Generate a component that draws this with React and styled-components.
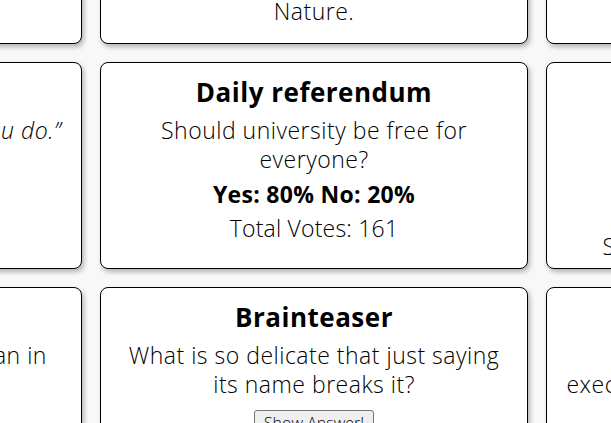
import React from 'react';
import styled, { createGlobalStyle } from 'styled-components';

const GlobalStyle = createGlobalStyle`
  html, body {
    margin: 0;
    padding: 0;
    background: #f8f8f8;
    overflow: hidden;
  }
  body {
    font-family: "Open Sans", Lato, sans-serif;
    color: #000;
  }
`;

const Viewport = styled.div`
  width: 611px;
  height: 423px;
  overflow: hidden;
`;

const Board = styled.div`
  display: grid;
  grid-template-columns: repeat(3, 428px);
  grid-template-rows: 217px 207px 207px;
  gap: 18px;
  margin-left: -346px;
  margin-top: -173px;
`;

const Card = styled.section`
  box-sizing: border-box;
  background: #fff;
  border: 1px solid #000;
  border-radius: 8px;
  box-shadow: 2px 3px 5px rgba(0, 0, 0, 0.28);
  padding: 14px 18px 0;
  display: flex;
  flex-direction: column;
  align-items: center;
  text-align: center;
`;

const Title = styled.h2`
  margin: 0 0 8px;
  font-size: 26px;
  line-height: 31px;
  font-weight: 700;
  letter-spacing: 0.5px;
`;

const Text = styled.p`
  margin: 0;
  font-size: 23px;
  line-height: 29px;
  font-weight: 300;
  letter-spacing: 0.5px;
  font-style: ${(p) => (p.$italic ? 'italic' : 'normal')};
`;

const Result = styled.p`
  margin: 6px 0 0;
  font-size: 23px;
  line-height: 29px;
  font-weight: 700;
  letter-spacing: 0.3px;
`;

const Votes = styled.p`
  margin: 5px 0 0;
  font-size: 23px;
  line-height: 29px;
  font-weight: 300;
  letter-spacing: 0.2px;
`;

const AnswerButton = styled.button`
  margin-top: 11px;
  font-family: inherit;
  font-size: 16px;
  font-weight: 300;
  padding: 1px 9px;
  color: #000;
  background: #efefef;
  border: 1px solid #767676;
  border-radius: 3px;
`;

export default function App() {
  return (
    <Viewport>
      <GlobalStyle />
      <Board>
        <Card>
          <Title>Quote of the day</Title>
          <Text $italic>“Stay hungry, stay foolish.”</Text>
        </Card>
        <Card>
          <Title>Fact of the day</Title>
          <Text>
            Honey never spoils: jars found
            <br />
            in ancient tombs are still
            <br />
            edible, one of the longest-lasting
            <br />
            foods known in all of
            <br />
            Nature.
          </Text>
        </Card>
        <Card>
          <Title>Word of the day</Title>
          <Text>Ephemeral</Text>
        </Card>

        <Card>
          <Title>Quote of the day</Title>
          <Text $italic>“Do what you love, love what you do.”</Text>
        </Card>
        <Card>
          <Title>Daily referendum</Title>
          <Text>Should university be free for everyone?</Text>
          <Result>Yes: 80% No: 20%</Result>
          <Votes>Total Votes: 161</Votes>
        </Card>
        <Card>
          <Title>Word of the day</Title>
          <Text>
            Ephemeral
            <br />
            lasting a very short
            <br />
            time, like a mayfly
            <br />
            or a soap bubble.
            <br />
            Synonyms: fleeting, brief, fast
          </Text>
        </Card>

        <Card>
          <Title>Fun fact</Title>
          <Text>
            Light moves quicker in air than in
            <br />
            water or glass.
          </Text>
        </Card>
        <Card>
          <Title>Brainteaser</Title>
          <Text>What is so delicate that just saying its name breaks it?</Text>
          <AnswerButton>Show Answer!</AnswerButton>
        </Card>
        <Card>
          <Title>Productivity tip</Title>
          <Text>
            Plan your day, then
            <br />
            execute the plan one small task at a time.
          </Text>
        </Card>
      </Board>
    </Viewport>
  );
}
